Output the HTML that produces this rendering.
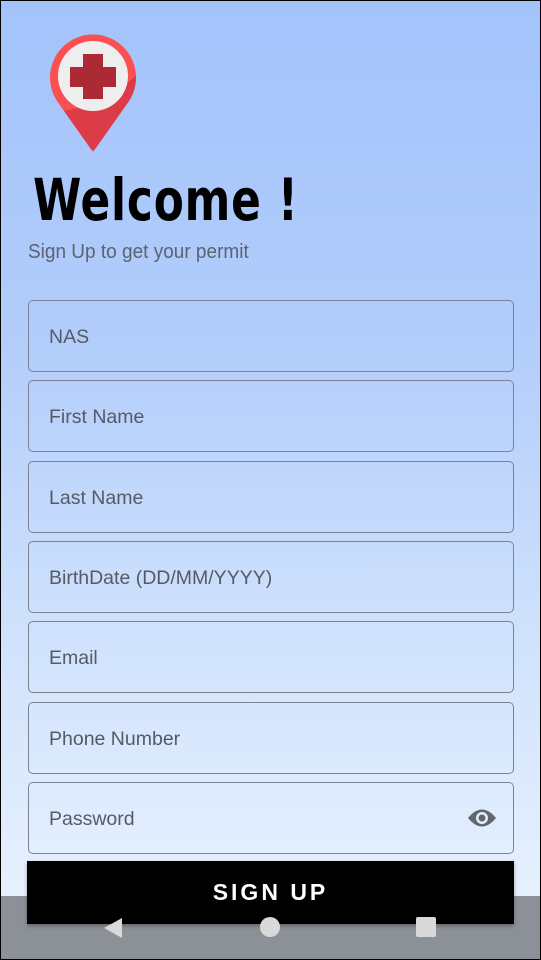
<!DOCTYPE html>
<html><head><style>
*{margin:0;padding:0;box-sizing:border-box}
body{width:541px;height:960px;overflow:hidden;position:relative;font-family:"Liberation Sans",sans-serif;background:linear-gradient(#a3c3fb 0%,#b2cdfb 35%,#d3e4fd 70%,#ecf4fe 100%);box-shadow:inset 0 0 0 1px #000}
.f{position:absolute;left:28px;width:486px;height:72px;border:1.5px solid #7d838e;border-radius:5px;font-size:19.5px;color:#555b64;padding-left:20px;line-height:72px}
h1{position:absolute;left:33px;top:166px;font-size:58px;font-weight:bold;letter-spacing:1px;color:#000;transform:scaleX(0.84);transform-origin:left;font-family:"DejaVu Sans Condensed","Liberation Sans",sans-serif}
.sub{position:absolute;left:28px;top:241px;font-size:20px;color:#5b6370;font-weight:300;transform:scaleX(0.95);transform-origin:left}
.btn{position:absolute;left:27px;top:861px;width:487px;height:63px;background:#000;color:#fff;text-align:center;font-size:23px;font-weight:bold;letter-spacing:3px;line-height:63px;z-index:2;box-shadow:0 2px 4px rgba(0,0,0,.3)}
.nav{position:absolute;left:1px;top:896px;width:539px;height:63px;background:#8c9198;z-index:1}
.ic{position:absolute;z-index:3}
</style></head><body>
<svg style="position:absolute;left:49px;top:33px" width="90" height="122" viewBox="0 0 90 122">
<defs><clipPath id="c"><path d="M44 119 L8 68 A43 43 0 1 1 80 68 Z"/></clipPath></defs>
<g clip-path="url(#c)">
<rect width="90" height="122" fill="#fb5050"/>
<path d="M0 112 L0 80 Q50 76 90 40 L90 122 Z" fill="#dc3c48"/>
</g>
<circle cx="44" cy="43" r="35" fill="#eeeeee"/>
<rect x="34" y="21" width="20" height="45" fill="#ad2935"/>
<rect x="21" y="34" width="46" height="20" fill="#ad2935"/>
</svg>
<h1>Welcome !</h1>
<div class="sub">Sign Up to get your permit</div>
<div class="f" style="top:300px">NAS</div>
<div class="f" style="top:380px">First Name</div>
<div class="f" style="top:461px">Last Name</div>
<div class="f" style="top:541px">BirthDate (DD/MM/YYYY)</div>
<div class="f" style="top:621px">Email</div>
<div class="f" style="top:702px">Phone Number</div>
<div class="f" style="top:782px">Password
<svg style="position:absolute;right:16px;top:24px" width="30" height="22" viewBox="0 0 30 22"><path d="M1 11 Q15 -6 29 11 Q15 28 1 11Z" fill="#62666d"/><circle cx="15" cy="11" r="6" fill="#e3eefc"/><circle cx="15" cy="11" r="3.5" fill="#62666d"/></svg></div>
<div class="btn">SIGN UP</div>
<div class="nav"></div>
<svg class="ic" style="left:102px;top:916px" width="22" height="24"><path d="M20 2 L2 12 L20 22Z" fill="#d9d9d9"/></svg>
<div class="ic" style="left:260px;top:917px;width:20px;height:20px;border-radius:50%;background:#d9d9d9"></div>
<div class="ic" style="left:416px;top:917px;width:20px;height:20px;border-radius:2px;background:#d9d9d9"></div>
</body></html>
